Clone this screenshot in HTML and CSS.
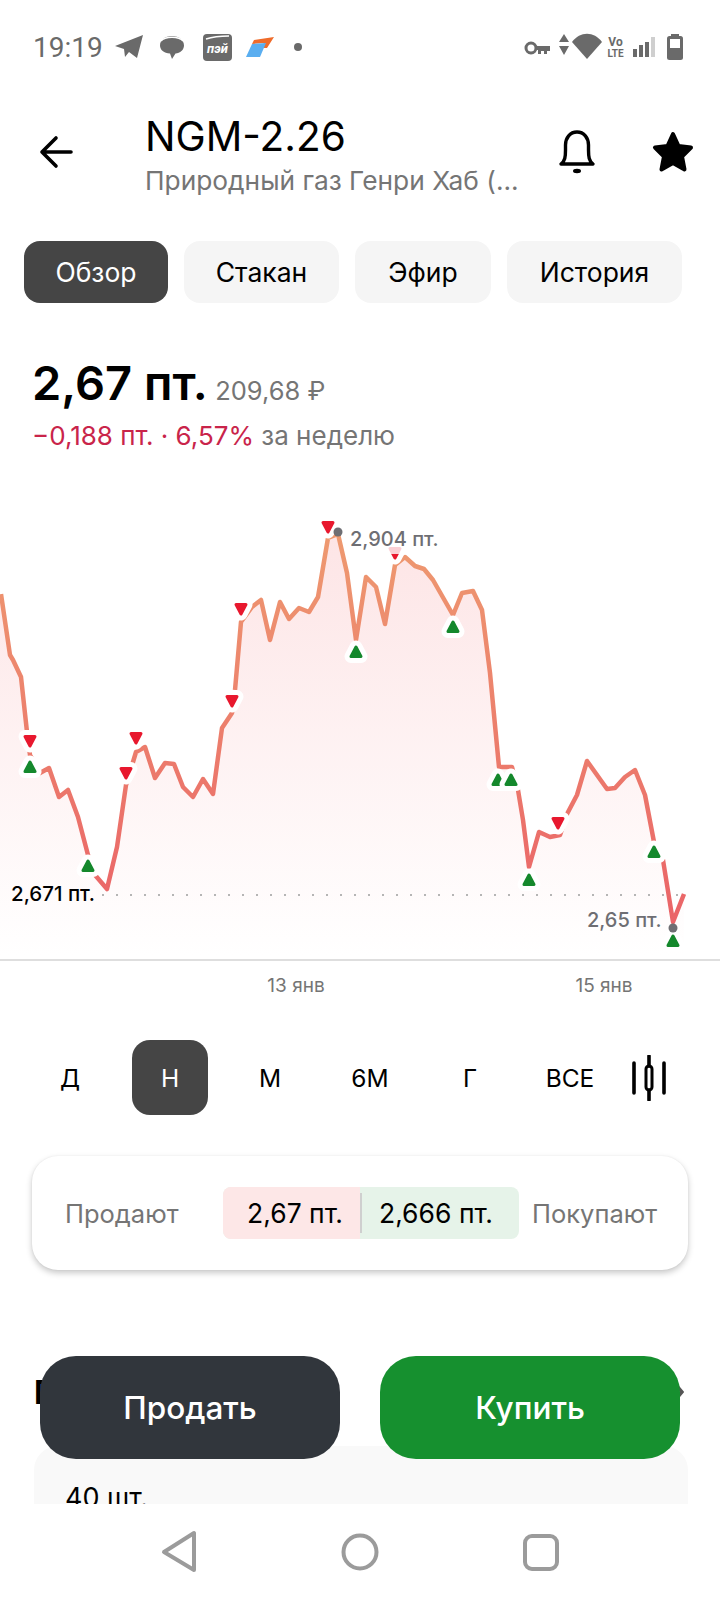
FILE: index.html
```html
<!DOCTYPE html>
<html lang="ru">
<head>
    <meta charset="UTF-8">
    <title>NGM-2.26</title>
    <link rel="stylesheet" href="styles.css">
</head>
<body>
<div class="status">
    <span class="time">19:19</span>
    <svg class="st-plane" width="28" height="24" viewBox="0 0 28 24"><path d="M28 0 22 23 14 17 10 22 9 14 0 11Z" fill="#6a6a6a"/></svg>
    <svg class="st-chat" width="26" height="24" viewBox="0 0 26 24"><path d="M13 1C20 1 25 5 25 10.500 25 15 21 18 16.500 18.500L13 24 11 18.500C5 18 1 15 1 10.500 1 5 6 1 13 1Z" fill="#6a6a6a"/><path d="M2 6C6 1 20 1 24 6" fill="none" stroke="#fff" stroke-width="1.300"/></svg>
    <svg class="st-card" width="29" height="28" viewBox="0 0 29 28"><rect y="1" width="29" height="27" rx="4" fill="#6a6a6a"/><path d="M3 6C9 4 17 3 26 3" fill="none" stroke="#fff" stroke-width="1.500"/><text x="14.500" y="20" text-anchor="middle" class="st-pay">пэй</text></svg>
    <svg class="st-logo" width="28" height="20" viewBox="0 0 28 20"><path d="M8 3 28 0 21 11 15 11 18 6 6 7Z" fill="#ef6b2a"/><path d="M6 7 20 6 14 20 0 20Z" fill="#5aaef0"/></svg>
    <span class="st-dot"></span>
    <svg class="st-right" width="160" height="28" viewBox="525 34 160 28">
        <circle cx="532" cy="49" r="5" fill="none" stroke="#6a6a6a" stroke-width="3"/>
        <path d="M537 47H551V52H548V55H545V52H542V55H539V51H537Z" fill="#6a6a6a"/>
        <path d="M565 35 570 43H560ZM565 56 560 47H570Z" fill="#6a6a6a"/>
        <path d="M573 43C581 32 595 32 603 43L588 60Z" fill="#6a6a6a"/>
        <text x="616.500" y="47" text-anchor="middle" class="st-vo">Vo</text>
        <text x="616.500" y="58" text-anchor="middle" class="st-lte">LTE</text>
        <rect x="634" y="50" width="4" height="8" fill="#6a6a6a"/>
        <rect x="640" y="46" width="4" height="12" fill="#6a6a6a"/>
        <rect x="646" y="43" width="4" height="15" fill="#6a6a6a"/>
        <rect x="652" y="38" width="4" height="20" fill="#cfcfcf"/>
        <rect x="672" y="35" width="8" height="3" fill="#6a6a6a"/>
        <rect x="668" y="37" width="16" height="24" rx="2.500" fill="#6a6a6a"/>
        <rect x="671" y="40" width="10" height="9" fill="#fff"/>
    </svg>
</div>

<div class="header">
    <svg class="back" width="34" height="34" viewBox="0 0 34 34"><path d="M32 17H3M17 3 3 17 17 31" fill="none" stroke="#000" stroke-width="3.600" stroke-linecap="round" stroke-linejoin="round"/></svg>
    <div class="title-box">
        <div class="title">NGM-2.26</div>
        <div class="subtitle">Природный газ Генри Хаб (...</div>
    </div>
    <svg class="bell" width="38" height="44" viewBox="0 0 38 44"><path d="M3 34C7 31 7.500 27 7.500 20V15C7.500 8 12 2 19 2S30.500 8 30.500 15V20C30.500 27 31 31 35 34Z" fill="none" stroke="#000" stroke-width="3.400" stroke-linejoin="round"/><ellipse cx="19" cy="41" rx="4" ry="2.200"/></svg>
    <svg class="star" width="42" height="42" viewBox="0 0 42 42"><path d="M21 3 26.500 15 39 16.500 30 25.500 32.500 38.500 21 32 9.500 38.500 12 25.500 3 16.500 15.500 15Z" stroke="#000" stroke-width="4" stroke-linejoin="round"/></svg>
</div>

<div class="tabs">
    <div class="tab tab-on">Обзор</div>
    <div class="tab">Стакан</div>
    <div class="tab">Эфир</div>
    <div class="tab">История</div>
</div>

<div class="price">
    <div class="price-line"><span class="price-main">2,67 пт.</span> <span class="price-rub">209,68 ₽</span></div>
    <div class="delta"><span class="delta-red">−0,188 пт. · 6,57%</span> за неделю</div>
</div>

<svg class="chart" width="720" height="549" viewBox="0 451 720 549">
    <defs>
        <linearGradient id="lineGrad" gradientUnits="userSpaceOnUse" x1="0" y1="530" x2="0" y2="930">
            <stop offset="0" stop-color="#ee9a70"/>
            <stop offset="1" stop-color="#ea6368"/>
        </linearGradient>
        <linearGradient id="fillGrad" gradientUnits="userSpaceOnUse" x1="0" y1="540" x2="0" y2="955">
            <stop offset="0" stop-color="#fde5e6"/>
            <stop offset="1" stop-color="#ffffff"/>
        </linearGradient>
        <g id="up"><path class="halo" d="M0-5 5 4.500H-5Z"/><path d="M0-5 5 4.500H-5Z" fill="#14882c" stroke="#14882c" stroke-width="3" stroke-linejoin="round"/></g>
        <g id="down"><path class="halo" d="M-5-4.500H5L0 5Z"/><path d="M-5-4.500H5L0 5Z" fill="#e8182e" stroke="#e8182e" stroke-width="3" stroke-linejoin="round"/></g>
    </defs>
    <path class="area" d="M0 594 10 655 13 660 21 677 27 732 30 755 40 773 49 768 59 797 68 790 78 817 88 855 95 875 107 889 117 847 126 785 133 762 136 752 145 747 155 778 165 763 174 764 183 787 193 797 203 779 213 794 222 728 232 713 235 690 241 622 252 607 261 600 270 640 280 602 289 619 299 608 309 612 318 597 328 538 338 532 347 573 356 640 366 577 376 587 385 624 395 565 405 557 415 566 424 569 433 580 453 615 462 593 473 591 482 610 490 673 499 767 512 767 518 790 523 820 529 867 539 832 550 837 560 835 567 814 577 795 587 761 607 789 615 788 625 777 635 770 645 795 654 842 663 860 673 922 684 894V955H0Z"/>
    <line class="dots" x1="102" y1="895" x2="684" y2="895"/>
    <path class="line" d="M1 594 10 655 13 660 21 677 27 732 30 755 40 773 49 768 59 797 68 790 78 817 88 855 95 875 107 889 117 847 126 785 133 762 136 752 145 747 155 778 165 763 174 764 183 787 193 797 203 779 213 794 222 728 232 713 235 690 241 622 252 607 261 600 270 640 280 602 289 619 299 608 309 612 318 597 328 538 338 534 347 573 356 640 366 577 376 587 385 624 395 565 405 557 415 566 424 569 433 580 453 615 462 593 473 591 482 610 490 673 499 767 512 767 518 790 523 820 529 867 539 832 550 837 560 835 567 814 577 795 587 761 607 789 615 788 625 777 635 770 645 795 654 842 663 860 673 922 684 894"/>

    <use href="#down" x="30" y="741"/>
    <use href="#up" x="30" y="767"/>
    <use href="#up" x="88" y="866"/>
    <use href="#down" x="136" y="738"/>
    <use href="#down" x="126" y="773"/>
    <use href="#down" x="232" y="701"/>
    <use href="#down" x="241" y="609"/>
    <use href="#down" x="328" y="527"/>
    <use href="#up" x="356" y="652"/>
    <use href="#down" x="395" y="553"/>
    <use href="#up" x="453" y="627"/>
    <use href="#up" x="498" y="780"/>
    <use href="#up" x="511" y="780"/>
    <use href="#up" x="529" y="880"/>
    <use href="#down" x="558" y="823"/>
    <use href="#up" x="654" y="852"/>
    <use href="#up" x="673" y="941"/>

    <rect class="veil" x="385" y="544" width="20" height="10"/>
    <circle class="peak" cx="338" cy="532" r="4.500"/>
    <circle class="peak" cx="673" cy="928" r="4.500"/>
    <text class="lbl" x="350" y="546">2,904 пт.</text>
    <text class="lbl" x="587" y="927">2,65 пт.</text>
    <text class="lbl lbl-now" x="11" y="901">2,671 пт.</text>
    <line class="axis" x1="0" y1="960" x2="720" y2="960"/>
    <text class="lbl-x" x="296" y="992" text-anchor="middle">13 янв</text>
    <text class="lbl-x" x="604" y="992" text-anchor="middle">15 янв</text>
</svg>

<div class="periods">
    <div class="period">Д</div>
    <div class="period period-on">Н</div>
    <div class="period">М</div>
    <div class="period">6М</div>
    <div class="period">Г</div>
    <div class="period">ВСЕ</div>
    <svg class="candle" width="34" height="46" viewBox="0 0 34 46"><path d="M2 8V38M32 8V38M17 1V11M17 35V45" fill="none" stroke="#000" stroke-width="3.600" stroke-linecap="round"/><rect x="14" y="11" width="6" height="24" rx="3" fill="none" stroke="#000" stroke-width="3"/></svg>
</div>

<div class="quote-card">
    <span class="quote-side">Продают</span>
    <div class="quote-pill">
        <span class="quote-ask">2,67 пт.</span>
        <span class="quote-sep"></span>
        <span class="quote-bid">2,666 пт.</span>
    </div>
    <span class="quote-side">Покупают</span>
</div>

<div class="sec-head">
    <span class="sec-title">П</span>
    <svg class="sec-more" width="14" height="28" viewBox="0 0 14 28"><path d="M2 2 12 14 2 26" fill="none" stroke="#555" stroke-width="3.500"/></svg>
</div>
<div class="pos-card">40 шт.</div>

<div class="actions">
    <div class="btn btn-sell">Продать</div>
    <div class="btn btn-buy">Купить</div>
</div>

<svg class="nav" width="720" height="96" viewBox="0 1504 720 96">
    <path d="M194 1533V1570L164 1552Z" stroke-linejoin="round"/>
    <circle cx="360" cy="1552" r="16.500"/>
    <rect x="525" y="1536" width="32" height="33" rx="7"/>
</svg>
</body>
</html>
```

FILE: styles.css
```css
* {
    box-sizing: border-box;
}
body {
    margin: 0;
    width: 720px;
    height: 1600px;
    position: relative;
    overflow: hidden;
    background: #fff;
    color: #000;
    font-family: Inter, "Noto Sans", sans-serif;
}

/* status bar */
.status {
    height: 94px;
    padding: 0 36px 0 33px;
    display: flex;
    align-items: center;
    gap: 16px;
}
.time {
    font-size: 28px;
    color: #6a6a6a;
    font-family: Roboto, sans-serif;
    margin-right: -4px;
}
.st-pay {
    font: italic 700 13px Roboto, sans-serif;
    fill: #fff;
}
.st-card {
    margin-left: 2px;
}
.st-logo {
    margin-left: -2px;
}
.st-dot {
    width: 8px;
    height: 8px;
    border-radius: 50%;
    background: #6a6a6a;
    margin-left: 4px;
}
.st-right {
    margin-left: auto;
}
.st-vo {
    font: 700 12px Roboto, sans-serif;
    fill: #6a6a6a;
}
.st-lte {
    font: 700 10px Roboto, sans-serif;
    fill: #6a6a6a;
}

/* header */
.header {
    height: 147px;
    padding: 20px 26px 0 39px;
    display: flex;
    align-items: flex-start;
}
.back {
    margin-top: 21px;
}
.title-box {
    margin-left: 72px;
    width: 413px;
}
.title {
    font-size: 40.500px;
    line-height: 46px;
}
.subtitle {
    font-size: 26.300px;
    line-height: 42px;
    color: #757575;
    white-space: nowrap;
}
.bell {
    margin-top: 16px;
}
.star {
    margin: 17px 0 0 56px;
}

/* tabs */
.tabs {
    display: grid;
    grid-template-columns: 144px 155px 136px 175px;
    gap: 16px;
    margin-left: 24px;
}
.tab {
    height: 62px;
    border-radius: 16px;
    background: #f5f5f5;
    font-size: 26.500px;
    display: flex;
    align-items: center;
    justify-content: center;
}
.tab-on {
    background: #454545;
    color: #fff;
}

/* price */
.price {
    margin-top: 52px;
    padding-left: 32px;
}
.price-line {
    height: 56px;
    line-height: 56px;
    white-space: nowrap;
}
.price-main {
    font-size: 47px;
    font-weight: 600;
}
.price-rub {
    font-size: 25.500px;
    color: #757575;
    margin-left: 3px;
}
.delta {
    margin-top: 10px;
    font-size: 26px;
    line-height: 30px;
    color: #757575;
}
.delta-red {
    color: #c9244a;
}

/* chart */
.chart {
    display: block;
}
.area {
    fill: url(#fillGrad);
}
.line {
    fill: none;
    stroke: url(#lineGrad);
    stroke-width: 4.500;
    stroke-linejoin: round;
}
.halo {
    fill: #fff;
    stroke: #fff;
    stroke-width: 13;
    stroke-linejoin: round;
}
.dots {
    stroke: #b5b5b5;
    stroke-width: 2;
    stroke-dasharray: 2 12;
}
.axis {
    stroke: #dedede;
    stroke-width: 2;
}
.veil {
    fill: #fff;
    fill-opacity: 0.8;
}
.peak {
    fill: #6e6e73;
}
.lbl {
    font-size: 20px;
    font-weight: 500;
    fill: #6e6e73;
}
.lbl-now {
    font-size: 20.500px;
    fill: #000;
}
.lbl-x {
    font-size: 19px;
    fill: #757575;
}

/* period switch */
.periods {
    margin-top: 40px;
    padding-left: 20px;
    display: flex;
    align-items: center;
    height: 75px;
}
.period {
    width: 76px;
    height: 75px;
    margin: 0 12px;
    border-radius: 18px;
    font-size: 24.500px;
    display: flex;
    align-items: center;
    justify-content: center;
    white-space: nowrap;
}
.period-on {
    background: #454545;
    color: #fff;
}
.candle {
    margin-left: 12px;
}

/* sell / buy quote */
.quote-card {
    margin: 41px 32px 0 32px;
    height: 114px;
    border-radius: 26px;
    background: #fff;
    box-shadow: 0 3px 6px rgba(0, 0, 0, 0.22), 0 0 2px rgba(0, 0, 0, 0.06);
    padding: 0 33px;
    display: grid;
    grid-template-columns: 145px 296px auto;
    column-gap: 13px;
    align-items: center;
}
.quote-side {
    font-size: 25.500px;
    color: #757575;
    white-space: nowrap;
}
.quote-pill {
    display: flex;
    height: 52px;
    border-radius: 8px;
    overflow: hidden;
    font-size: 26.500px;
    background: #e6f3e9;
}
.quote-ask {
    width: 137px;
    padding-right: 17px;
    background: #fde7e7;
    display: flex;
    align-items: center;
    justify-content: flex-end;
}
.quote-sep {
    width: 2px;
    height: 40px;
    align-self: center;
    background: #cfcfcf;
}
.quote-bid {
    flex: 1;
    padding-left: 17px;
    display: flex;
    align-items: center;
}

/* content below the buttons */
.sec-head {
    margin-top: 104px;
    padding: 0 36px 0 34px;
    height: 36px;
    display: flex;
    align-items: center;
    justify-content: space-between;
}
.sec-title {
    font-size: 32px;
    font-weight: 700;
}
.pos-card {
    margin: 36px 32px 0 34px;
    height: 120px;
    padding: 36px 31px 0;
    background: #f9f9f9;
    border-radius: 24px;
    font-size: 27px;
    line-height: 32px;
}

/* buttons lie over the content */
.actions {
    position: absolute;
    left: 40px;
    top: 1356px;
    width: 640px;
    display: flex;
    justify-content: space-between;
}
.btn {
    width: 300px;
    height: 103px;
    border-radius: 36px;
    color: #fff;
    font-size: 31.500px;
    font-weight: 500;
    display: flex;
    align-items: center;
    justify-content: center;
}
.btn-sell {
    background: #31363c;
}
.btn-buy {
    background: #16902f;
}

/* system nav */
.nav {
    position: absolute;
    left: 0;
    bottom: 0;
    background: #fff;
    fill: none;
    stroke: #9b9b9b;
    stroke-width: 4;
}
```
